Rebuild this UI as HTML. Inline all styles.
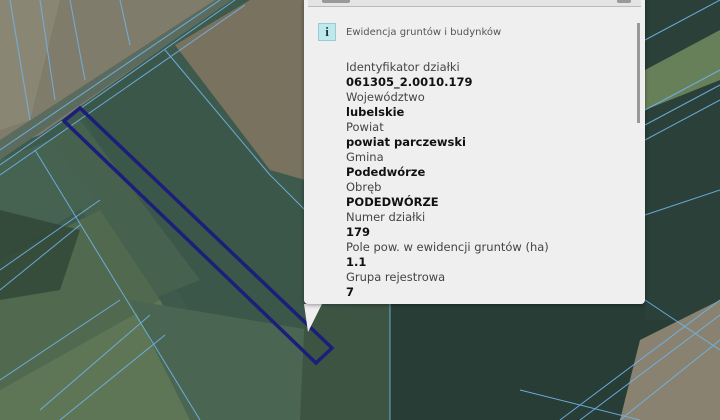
<!DOCTYPE html>
<html><head><meta charset="utf-8"><style>
html,body{margin:0;padding:0;width:720px;height:420px;overflow:hidden;background:#3a4e44;font-family:"DejaVu Sans","Liberation Sans",sans-serif}
#map{position:absolute;left:0;top:0}
#pop{position:absolute;left:304px;top:-2px;width:341px;height:306px;background:#efefef;border-radius:0 0 4px 4px;box-shadow:0 1px 4px rgba(0,0,0,.4)}
#pop .hdr{position:absolute;left:4px;right:4px;top:0;height:8px;border-bottom:1px solid #bbb;background:#e4e4e4}
#pop .b1{position:absolute;left:14px;top:0;width:28px;height:5px;background:#999;border-radius:0 0 2px 2px}
#pop .b2{position:absolute;right:10px;top:0;width:14px;height:5px;background:#999;border-radius:0 0 2px 2px}
.icon{position:absolute;left:14px;top:25px;width:16px;height:16px;background:#bfe8ef;border:1px solid #9cc;font:bold 13px "Liberation Serif",serif;color:#234;text-align:center;line-height:16px}
.title{position:absolute;left:42px;top:29px;font-size:10px;color:#555}
.list{position:absolute;left:42px;top:62px;font-size:11.5px;line-height:15px;color:#444}
.list b{color:#111;display:block;font-weight:bold}
.list span{display:block}
.sb{position:absolute;left:333px;top:25px;width:3px;height:100px;background:#999}
#tail{position:absolute;left:304px;top:304px}
</style></head><body>
<svg id="map" width="720" height="420" viewBox="0 0 720 420">
<rect width="720" height="420" fill="#3e5a4c"/>
<polygon points="0,0 230,0 40,135 0,150" fill="#7f7c6c"/>
<polygon points="0,0 60,0 30,120 0,130" fill="#8a8674"/>
<polygon points="175,45 250,0 305,0 305,180 270,170" fill="#79725f"/>
<polygon points="80,108 165,50 265,170 305,210 305,340 200,330 120,190" fill="#3b5749"/>
<polygon points="35,150 80,120 200,280 150,300" fill="#47614f"/>
<polygon points="0,160 50,140 95,200 0,260" fill="#466250"/>
<polygon points="0,260 100,210 160,300 0,390" fill="#51694f"/>
<polygon points="0,390 160,300 230,420 0,420" fill="#5e7656"/>
<polygon points="0,210 80,230 60,290 0,300" fill="#2f4636" opacity=".8"/>
<polygon points="130,300 310,330 300,420 190,420" fill="#4a6551"/>
<polygon points="380,300 720,300 720,420 380,420" fill="#283d36"/>
<polygon points="645,0 720,0 720,320 645,320" fill="#2a4038"/>
<polygon points="645,70 720,30 720,80 645,110" fill="#68805a"/>
<polygon points="640,340 720,300 720,420 620,420" fill="#8a8270"/>
<polygon points="305,310 390,300 390,420 300,420" fill="#3e5443"/>
<polygon points="0,140 215,0 232,0 0,160" fill="#5b6c5e"/>
<g stroke="#6fb4e8" stroke-width="1" fill="none" opacity=".9">
<line x1="0" y1="150" x2="220" y2="0"/><line x1="0" y1="165" x2="235" y2="0"/>
<line x1="0" y1="175" x2="245" y2="5"/>
<line x1="165" y1="50" x2="270" y2="175"/><line x1="270" y1="175" x2="305" y2="210"/>
<line x1="35" y1="150" x2="200" y2="420"/><line x1="100" y1="200" x2="0" y2="270"/>
<line x1="80" y1="225" x2="0" y2="290"/><line x1="120" y1="300" x2="0" y2="380"/>
<line x1="150" y1="315" x2="40" y2="410"/><line x1="165" y1="335" x2="60" y2="420"/>
<line x1="10" y1="0" x2="30" y2="120"/><line x1="40" y1="0" x2="55" y2="100"/>
<line x1="70" y1="0" x2="85" y2="80"/><line x1="120" y1="0" x2="130" y2="45"/>
<line x1="645" y1="40" x2="720" y2="0"/><line x1="645" y1="110" x2="720" y2="70"/>
<line x1="645" y1="125" x2="720" y2="85"/><line x1="645" y1="140" x2="720" y2="100"/>
<line x1="645" y1="215" x2="720" y2="190"/><line x1="645" y1="300" x2="720" y2="350"/>
<line x1="560" y1="420" x2="720" y2="300"/><line x1="580" y1="420" x2="720" y2="315"/>
<line x1="620" y1="420" x2="720" y2="340"/><line x1="390" y1="300" x2="390" y2="420"/>
<line x1="520" y1="390" x2="640" y2="420"/>
</g>
<polygon points="64,121 80,108 332,348 316,363" fill="none" stroke="#1b1f7a" stroke-width="3.5"/>
</svg>
<svg id="tail" width="20" height="30"><polygon points="0,0 18,0 4,28" fill="#efefef"/></svg>
<div id="pop">
<div class="hdr"><div class="b1"></div><div class="b2"></div></div>
<div class="icon">i</div>
<div class="title">Ewidencja gruntów i budynków</div>
<div class="sb"></div>
<div class="list">
<span>Identyfikator działki</span><b>061305_2.0010.179</b>
<span>Województwo</span><b>lubelskie</b>
<span>Powiat</span><b>powiat parczewski</b>
<span>Gmina</span><b>Podedwórze</b>
<span>Obręb</span><b>PODEDWÓRZE</b>
<span>Numer działki</span><b>179</b>
<span>Pole pow. w ewidencji gruntów (ha)</span><b>1.1</b>
<span>Grupa rejestrowa</span><b>7</b>
</div>
</div>
</body></html>
